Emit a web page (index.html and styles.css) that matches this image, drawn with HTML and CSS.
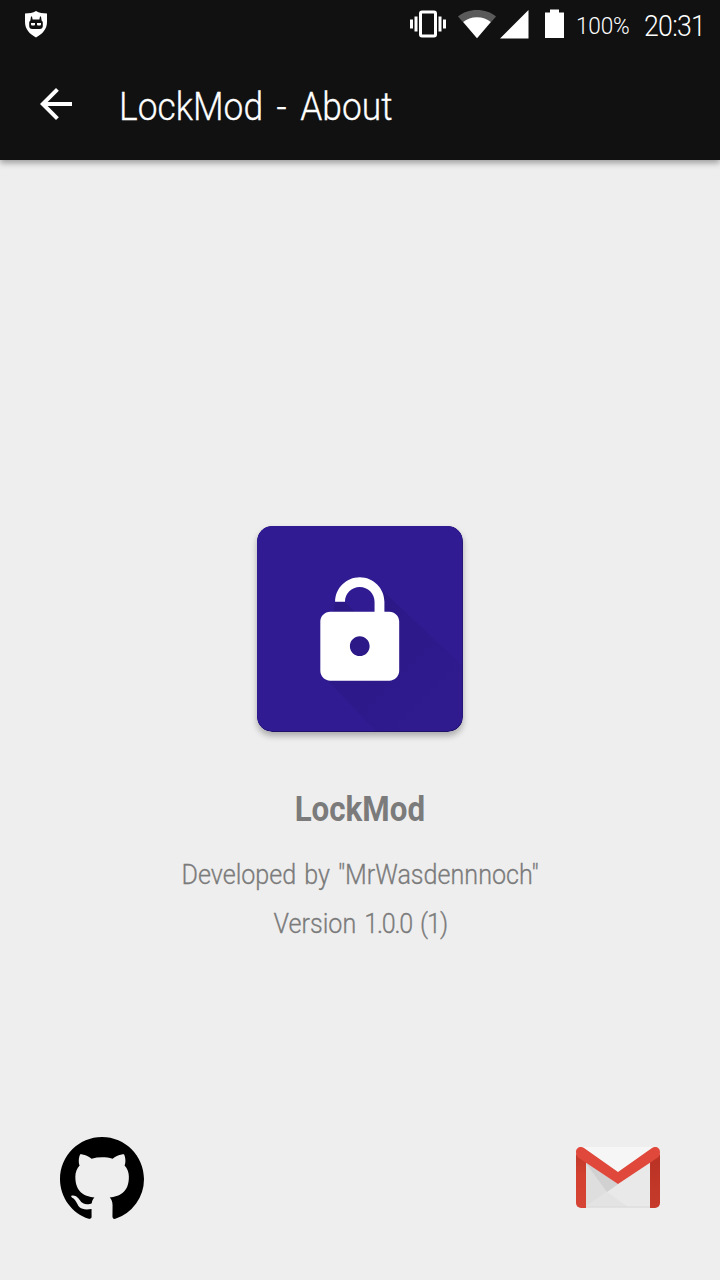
FILE: index.html
```html
<!DOCTYPE html>
<html lang="en">
<head>
<meta charset="utf-8">
<title>LockMod - About</title>
<link rel="stylesheet" href="styles.css">
</head>
<body>
<div class="screen">
  <header class="top">
    <div class="statusbar">
      <svg class="shield" width="24" height="28" viewBox="0 0 24 28">
        <path fill="#fff" d="M12 1C9 2.800 5 3.500 1 3.500V12c0 7 4.500 12 11 15.500C18.500 24 23 19 23 12V3.500C19 3.500 15 2.800 12 1z"/>
        <path fill="#111" d="M7 6.500h1l.6 3h6.800l.6-3h1l.6 4c.8.5 1.200 1.200 1.200 2V16c0 1.800-1.200 3-3 3H8.200c-1.800 0-3-1.200-3-3v-3.500c0-.8.4-1.500 1.200-2z"/>
        <path fill="#fff" d="M7 13h4v1.200c0 .8-.5 1.300-1.300 1.300H8.500C7.500 15.500 7 15 7 14zM13 13h4v1c0 1-.5 1.500-1.500 1.500h-1.200c-.8 0-1.300-.5-1.300-1.300z"/>
      </svg>
      <div class="signals">
        <svg class="glyphs" width="160" height="40" viewBox="408 4 160 40">
          <rect x="420.500" y="12" width="15" height="24" rx="1.500" fill="none" stroke="#fff" stroke-width="3"/>
          <path fill="#fff" d="M410 19.500h3v9h-3zM414.500 16.500h3v15h-3zM438.500 16.500h3v15h-3zM443 19.500h3v9h-3z"/>
          <path fill="#5a5a5a" d="M458 16.500C463 12.300 469.500 10 477 10s14 2.300 19 6.500L477 38z"/>
          <path fill="#fff" d="M463.200 22C467 18.700 471.500 17.200 477 17.200s10 1.500 13.800 4.800L477 38.200z"/>
          <path fill="#fff" d="M500 38.500L528.500 10v28.500zM545 12.500h5V9.500h9v3h5V38h-19z"/>
        </svg>
        <span class="percent">100%</span>
        <span class="clock">20:31</span>
      </div>
    </div>
    <div class="toolbar">
      <svg class="back" width="48" height="48" viewBox="0 0 24 24"><path fill="#fff" d="M20 11H7.830l5.590-5.590L12 4l-8 8 8 8 1.410-1.410L7.830 13H20z"/></svg>
      <h1 class="title">LockMod - About</h1>
    </div>
  </header>
  <main class="about">
    <svg class="app-icon" width="206" height="206" viewBox="257 526 206 206">
      <defs>
        <linearGradient id="cast" gradientUnits="userSpaceOnUse" x1="350" y1="620" x2="430" y2="700">
          <stop offset="0" stop-color="#1c1064" stop-opacity=".26"/>
          <stop offset="1" stop-color="#1c1064" stop-opacity=".09"/>
        </linearGradient>
      </defs>
      <rect x="257" y="526" width="206" height="206" rx="15" fill="#211269"/>
      <rect x="257" y="526" width="205.500" height="205" rx="15" fill="#311b92"/>
      <path fill="url(#cast)" d="M335 602h10l10 10h20l5-24 82.500 78v50a15 15 0 0 1-15 15H376l-50-52z"/>
      <g transform="translate(300.600 572.200) scale(4.930)">
        <path fill="#fff" fill-rule="evenodd" d="M12 17c1.100 0 2-.9 2-2s-.9-2-2-2-2 .9-2 2 .9 2 2 2zm6-9h-1V6c0-2.760-2.240-5-5-5S7 3.240 7 6h2c0-1.660 1.340-3 3-3s3 1.340 3 3v2H6c-1.100 0-2 .9-2 2v10c0 1.100.9 2 2 2h12c1.100 0 2-.9 2-2V10c0-1.100-.9-2-2-2z"/>
      </g>
    </svg>
    <h2 class="name">LockMod</h2>
    <p class="line author">Developed by "MrWasdennnoch"</p>
    <p class="line version">Version <span class="number">1.0.0</span> <span class="build">(1)</span></p>
  </main>
  <footer class="links">
    <svg class="github" width="84" height="84" viewBox="0 0 16 16"><path d="M8 0C3.580 0 0 3.580 0 8c0 3.540 2.290 6.530 5.470 7.590.4.070.55-.17.55-.38 0-.19-.01-.82-.01-1.490-2.010.37-2.530-.49-2.690-.94-.09-.23-.48-.94-.82-1.130-.28-.15-.68-.52-.01-.53.63-.01 1.080.58 1.230.82.72 1.210 1.870.87 2.330.66.07-.52.28-.87.51-1.070-1.780-.2-3.640-.89-3.640-3.950 0-.87.31-1.590.82-2.150-.08-.2-.36-1.020.08-2.120 0 0 .67-.21 2.200.82.640-.18 1.320-.27 2-.27s1.360.09 2 .27c1.530-1.040 2.200-.82 2.200-.82.440 1.100.160 1.920.080 2.120.510.560.820 1.270.820 2.150 0 3.070-1.870 3.750-3.650 3.950.290.250.540.730.540 1.480 0 1.070-.01 1.930-.01 2.200 0 .21.150.46.550.38A8.010 8.010 0 0 0 16 8c0-4.420-3.580-8-8-8z"/></svg>
    <svg class="mail" width="84" height="63" viewBox="0 0 84 63">
      <defs>
        <linearGradient id="side" x1="0" y1="0" x2="0" y2="1"><stop offset="0" stop-color="#c03a2c"/><stop offset=".4" stop-color="#d3402f"/><stop offset="1" stop-color="#d64435"/></linearGradient>
        <linearGradient id="side2" x1="0" y1="0" x2="0" y2="1"><stop offset="0" stop-color="#b93224"/><stop offset="1" stop-color="#c63b2b"/></linearGradient>
      </defs>
      <path fill="#e9e9e9" d="M8 1h69v61H8z"/>
      <path fill="#dedede" d="M9 16l33 22L9 61z"/>
      <path fill="#d1d1d1" d="M9 16l33 22-11 8z"/>
      <path fill="#e3e3e3" d="M31 46l21 15H9z"/>
      <path fill="#d9d9d9" d="M6 60.500h72v1H6z"/>
      <path fill="#f6f6f6" d="M6 1h72L42 27z"/>
      <path fill="url(#side)" d="M0 8l10 8v46H5a5 5 0 0 1-5-5z"/>
      <path fill="url(#side2)" d="M84 8l-10 8v46h5a5 5 0 0 0 5-5z"/>
      <path fill="#df483b" d="M0 6C0 3 2 1 5 1q1.500 0 3 1l34 24L76 2q1.500-1 3-1c3 0 5 2 5 5 0 2.500-.7 4.500-2.500 5.700L42 38 2.500 11.700C.7 10.500 0 8.500 0 6z"/>
    </svg>
  </footer>
</div>
</body>
</html>
```
FILE: styles.css
```css
body {
  margin: 0;
  font-family: Roboto, "Open Sans", sans-serif;
}
h1, h2, p { margin: 0; }
svg { display: block; flex: none; }
.screen {
  width: 720px;
  height: 1280px;
  display: flex;
  flex-direction: column;
  background: #eee;
  overflow: hidden;
}
.top {
  height: 160px;
  flex: none;
  background: #111;
  color: #fff;
  box-shadow: 0 3px 6px rgba(0, 0, 0, .34);
}
.statusbar {
  height: 48px;
  display: flex;
  align-items: center;
  justify-content: space-between;
  padding: 0 16px 0 24px;
}
.signals {
  display: flex;
  align-items: center;
  font-weight: 300;
  white-space: nowrap;
}
.percent {
  width: 55px;
  margin: 3px 13px 0 8px;
  font-size: 24px;
  line-height: 32px;
  letter-spacing: -.2px;
  transform: scaleX(.94);
  transform-origin: left;
}
.clock {
  width: 60px;
  margin-top: 3px;
  font-size: 29px;
  line-height: 36px;
  letter-spacing: -.8px;
  transform: scaleX(.92);
  transform-origin: left;
}
.toolbar {
  height: 112px;
  display: flex;
  align-items: center;
  padding-left: 32px;
}
.title {
  margin: 5px 0 0 39px;
  font-size: 38px;
  font-weight: 300;
  line-height: 48px;
  word-spacing: 5.3px;
  white-space: nowrap;
  transform: scaleX(.93);
  transform-origin: left;
  -webkit-text-stroke: .3px currentColor;
}
.about {
  flex: 1;
  display: flex;
  flex-direction: column;
  align-items: center;
  padding-top: 366px;
  color: #7b7b7b;
}
.app-icon {
  border-radius: 15px;
  box-shadow: 0 4px 6px rgba(0, 0, 0, .28);
}
.name {
  margin-top: 57px;
  font-size: 35px;
  font-weight: 700;
  line-height: 42px;
  transform: scaleX(.895);
}
.line {
  font-size: 27px;
  font-weight: 300;
  line-height: 36px;
  transform: scaleX(.93);
  word-spacing: 2px;
  -webkit-text-stroke: .3px currentColor;
}
.author { margin-top: 26px; }
.version { margin-top: 13px; }
.number { letter-spacing: -1.300px; }
.build { letter-spacing: -1px; }
.links {
  display: flex;
  align-items: center;
  justify-content: space-between;
  padding: 0 60px 59px;
}
.mail { margin-top: -4px; }
```
